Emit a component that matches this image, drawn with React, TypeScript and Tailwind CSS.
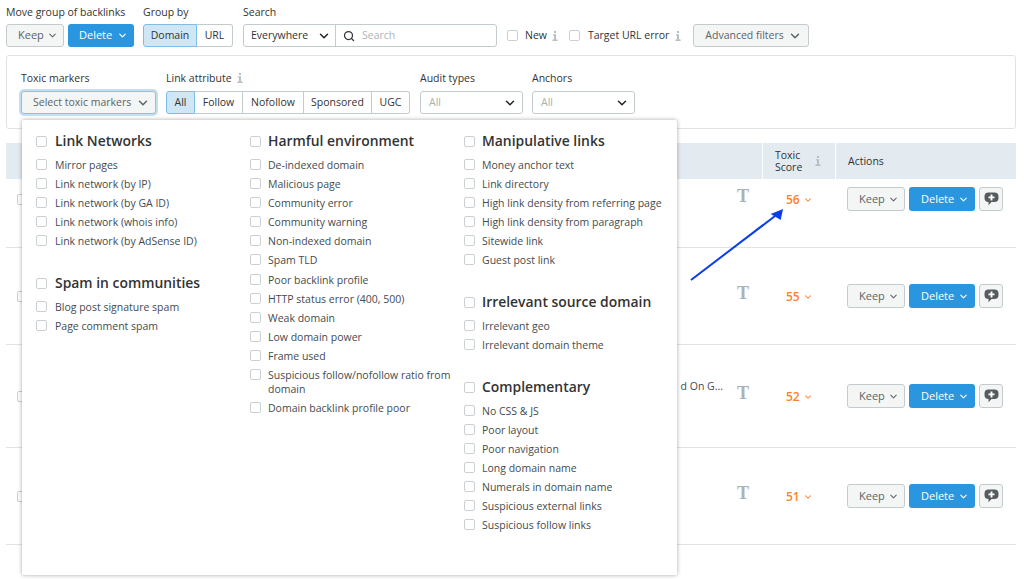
import { ChevronDown, Search } from "lucide-react";

const columnOne = [
  { title: "Link Networks", items: ["Mirror pages", "Link network (by IP)", "Link network (by GA ID)", "Link network (whois info)", "Link network (by AdSense ID)"] },
  { title: "Spam in communities", items: ["Blog post signature spam", "Page comment spam"] },
];

const columnTwo = [
  {
    title: "Harmful environment",
    items: [
      "De-indexed domain",
      "Malicious page",
      "Community error",
      "Community warning",
      "Non-indexed domain",
      "Spam TLD",
      "Poor backlink profile",
      "HTTP status error (400, 500)",
      "Weak domain",
      "Low domain power",
      "Frame used",
      "Suspicious follow/nofollow ratio from domain",
      "Domain backlink profile poor",
    ],
  },
];

const columnThree = [
  {
    title: "Manipulative links",
    items: [
      "Money anchor text",
      "Link directory",
      "High link density from referring page",
      "High link density from paragraph",
      "Sitewide link",
      "Guest post link",
    ],
  },
  { title: "Irrelevant source domain", items: ["Irrelevant geo", "Irrelevant domain theme"] },
  {
    title: "Complementary",
    items: [
      "No CSS & JS",
      "Poor layout",
      "Poor navigation",
      "Long domain name",
      "Numerals in domain name",
      "Suspicious external links",
      "Suspicious follow links",
    ],
  },
];

const rows = [
  { score: 56, rowClass: "h-[69px] pt-[8px]", text: "" },
  { score: 55, rowClass: "h-[97px] pt-[36px]", text: "" },
  { score: 52, rowClass: "h-[103px] pt-[39px]", text: "d On G..." },
  { score: 51, rowClass: "h-[97px] pt-[36px]", text: "" },
];

function Box() {
  return <span className="block h-[11px] w-[11px] shrink-0 rounded-[2px] border border-[#cbd0d3] bg-white" />;
}

function Info({ className = "" }: { className?: string }) {
  return (
    <svg className={`shrink-0 ${className}`} width="6" height="10" viewBox="0 0 6 10" fill="#b4c0c4">
      <rect x="2" y="0" width="2" height="2" />
      <path d="M1 3.2h3v5.4h1.6V10H.4V8.6H2V4.6H1z" />
    </svg>
  );
}

function Chevron({ className = "" }: { className?: string }) {
  return <ChevronDown className={`shrink-0 ${className}`} size={14} strokeWidth={2.5} />;
}

function KeepButton({ className = "" }: { className?: string }) {
  return (
    <button className={`flex w-[58px] items-center justify-between rounded-[3px] border border-[#c3cbcf] bg-[#f4f6f6] pl-[11px] pr-[5px] text-[11px] text-[#5a6367] ${className}`}>
      Keep
      <ChevronDown size={11} strokeWidth={2.2} />
    </button>
  );
}

function DeleteButton({ className = "" }: { className?: string }) {
  return (
    <button className={`flex w-[66px] items-center justify-between rounded-[3px] bg-[#2b96e0] pr-[6px] text-[11px] text-white ${className}`}>
      Delete
      <ChevronDown size={11} strokeWidth={2.5} />
    </button>
  );
}

function CommentButton() {
  return (
    <button className="flex h-[24px] w-[24px] items-center justify-center rounded-[3px] border border-[#c3cbcf] bg-[#f4f6f6]">
      <svg width="15" height="14" viewBox="0 0 15 14">
        <path d="M4.5 0.5h6a4 4 0 0 1 4 4v1.5a4 4 0 0 1-4 4H7.5l-3 3.2v-3.2a4 4 0 0 1-4-4V4.5a4 4 0 0 1 4-4z" fill="#555b5e" />
        <path d="M7.5 2.4v6M4.5 5.4h6" stroke="#fff" strokeWidth="1.9" />
      </svg>
    </button>
  );
}

function Segment({ items }: { items: { label: string; width: string }[] }) {
  return (
    <div className="flex h-[23px]">
      {items.map((item, i) => (
        <span
          key={item.label}
          className={`flex items-center justify-center border-y ${item.width} ${
            i === 0
              ? "rounded-l-[3px] border-l border-r border-[#7fbce6] bg-[#cfe6f6] text-[#333]"
              : "border-r border-[#c3cbcf] bg-white text-[#333]"
          } ${i === items.length - 1 ? "rounded-r-[3px]" : ""}`}
        >
          {item.label}
        </span>
      ))}
    </div>
  );
}

function SelectBox({ width, label }: { width: string; label: string }) {
  return (
    <div className={`flex h-[23px] items-center justify-between rounded-[3px] border border-[#c3cbcf] bg-white pl-[8px] pr-[5px] text-[#a9afb2] ${width}`}>
      {label}
      <Chevron className="text-[#222]" />
    </div>
  );
}

function MarkerGroup({
  title,
  items,
  textGap = "gap-[7px]",
  listGap = "gap-[5px]",
}: {
  title: string;
  items: string[];
  textGap?: string;
  listGap?: string;
}) {
  return (
    <div>
      <div className={`flex h-[20px] items-center ${textGap}`}>
        <Box />
        <span className="text-[13.9px] font-semibold text-[#333]">{title}</span>
      </div>
      <ul className={`mt-[7px] flex flex-col ${listGap}`}>
        {items.map((item) => (
          <li key={item} className={`flex text-[#444b4f] ${textGap}`}>
            <span className="pt-[1px]">
              <Box />
            </span>
            <span className="leading-[14px]">{item}</span>
          </li>
        ))}
      </ul>
    </div>
  );
}

export default function App() {
  return (
    <div className="relative h-[579px] w-[1024px] overflow-hidden bg-white font-['Open_Sans',sans-serif] text-[10.5px] text-[#333]">
      <div className="flex pl-[6px] pt-[5px]">
        <div className="w-[137px]">
          <div className="mb-[5px] h-[14px] leading-[14px]">Move group of backlinks</div>
          <div className="flex gap-[4px]">
            <KeepButton className="h-[23px]" />
            <DeleteButton className="h-[23px] pl-[11px]" />
          </div>
        </div>
        <div className="w-[100px]">
          <div className="mb-[5px] h-[14px] leading-[14px]">Group by</div>
          <Segment
            items={[
              { label: "Domain", width: "w-[54px]" },
              { label: "URL", width: "w-[36px]" },
            ]}
          />
        </div>
        <div className="w-[264px]">
          <div className="mb-[5px] h-[14px] leading-[14px]">Search</div>
          <div className="flex h-[23px] w-[254px] items-center rounded-[3px] border border-[#c3cbcf]">
            <div className="flex h-full w-[92px] items-center justify-between border-r border-[#c3cbcf] pl-[7px] pr-[4px]">
              Everywhere
              <Chevron className="text-[#222]" />
            </div>
            <Search size={12} strokeWidth={2.5} className="ml-[7px] text-[#333]" />
            <span className="ml-[7px] text-[#b0b5b8]">Search</span>
          </div>
        </div>
        <div className="flex h-[23px] items-center self-end">
          <Box />
          <span className="ml-[7px]">New</span>
          <Info className="ml-[5px]" />
          <span className="ml-[11px]">
            <Box />
          </span>
          <span className="ml-[8px]">Target URL error</span>
          <Info className="ml-[6px]" />
          <button className="ml-[12px] flex h-[23px] w-[116px] items-center justify-between rounded-[3px] border border-[#c3cbcf] bg-[#f4f6f6] pl-[11px] pr-[6px] text-[#5a6367]">
            Advanced filters
            <Chevron />
          </button>
        </div>
      </div>

      <div className="ml-[6px] mt-[8px] flex h-[74px] w-[1010px] gap-[10px] rounded-[3px] border border-[#dfe3e5] pl-[14px] pt-[15px]">
        <div>
          <div className="mb-[6px] h-[14px] leading-[14px]">Toxic markers</div>
          <div className="flex h-[23px] w-[135px] items-center justify-between rounded-[3px] border border-[#aeb9bd] bg-[#f4f6f6] pl-[11px] pr-[5px] text-[#5a6367] shadow-[0_0_0_2px_#bfe0f5]">
            Select toxic markers
            <Chevron />
          </div>
        </div>
        <div>
          <div className="mb-[6px] flex h-[14px] items-center gap-[5px] leading-[14px]">
            Link attribute
            <Info />
          </div>
          <Segment
            items={[
              { label: "All", width: "w-[29px]" },
              { label: "Follow", width: "w-[48px]" },
              { label: "Nofollow", width: "w-[61px]" },
              { label: "Sponsored", width: "w-[68px]" },
              { label: "UGC", width: "w-[38px]" },
            ]}
          />
        </div>
        <div>
          <div className="mb-[6px] h-[14px] leading-[14px]">Audit types</div>
          <SelectBox width="w-[103px]" label="All" />
        </div>
        <div className="-ml-[1px]">
          <div className="mb-[6px] h-[14px] leading-[14px]">Anchors</div>
          <SelectBox width="w-[103px]" label="All" />
        </div>
      </div>

      <div className="ml-[6px] mt-[14px] w-[1010px]">
        <div className="flex h-[36px] bg-[#e3eaf0]">
          <div className="flex-1" />
          <div className="flex w-[74px] items-center justify-between border-x border-white pl-[12px] pr-[14px]">
            <span className="leading-[12px]">
              Toxic
              <br />
              Score
            </span>
            <Info />
          </div>
          <div className="flex w-[180px] items-center pl-[12px] pt-[1px]">Actions</div>
        </div>
        {rows.map((row) => (
          <div key={row.score} className={`flex items-start border-b border-[#dfe3e5] ${row.rowClass}`}>
            <div className="flex h-[24px] flex-1 items-center pl-[11px]">
              <Box />
              <span className="ml-auto -translate-y-[9px] text-[#444b4f]">{row.text}</span>
              <span className="ml-[14px] mr-[13px] -translate-y-[3px] font-['Liberation_Serif',serif] text-[18px] font-bold leading-none text-[#aab2b5]">T</span>
            </div>
            <div className="flex h-[24px] w-[74px] items-center gap-[3px] pl-[24px] pt-[1px] text-[12px] font-semibold text-[#ff7f2a]">
              {row.score}
              <ChevronDown size={10} strokeWidth={2.5} />
            </div>
            <div className="flex w-[180px] gap-[4px] pl-[11px]">
              <KeepButton className="h-[24px] pt-[1px]" />
              <DeleteButton className="h-[24px] pl-[12px] pt-[1px]" />
              <CommentButton />
            </div>
          </div>
        ))}
      </div>

      <div className="absolute left-[22px] top-[120px] flex h-[455px] w-[655px] rounded-[2px] bg-white pl-[14px] pt-[11px] shadow-[0_0_4px_rgba(0,0,0,0.35)]">
        <div className="flex w-[214px] flex-col gap-[25px] pr-[16px]">
          {columnOne.map((group) => (
            <MarkerGroup key={group.title} {...group} textGap="gap-[8px]" />
          ))}
        </div>
        <div className="flex w-[214px] flex-col pr-[8px]">
          {columnTwo.map((group) => (
            <MarkerGroup key={group.title} {...group} listGap="gap-[5.1px]" />
          ))}
        </div>
        <div className="flex flex-1 flex-col gap-[25px] pr-[4px]">
          {columnThree.map((group) => (
            <MarkerGroup key={group.title} {...group} />
          ))}
        </div>
      </div>

      <svg className="absolute left-[685px] top-[203px]" width="105" height="82" viewBox="0 0 105 82">
        <path d="M6 77 L90 13" stroke="#0b3de8" strokeWidth="2" />
        <path d="M98 6 L95.7 17 L85.7 11 Z" fill="#0b3de8" />
      </svg>
    </div>
  );
}
